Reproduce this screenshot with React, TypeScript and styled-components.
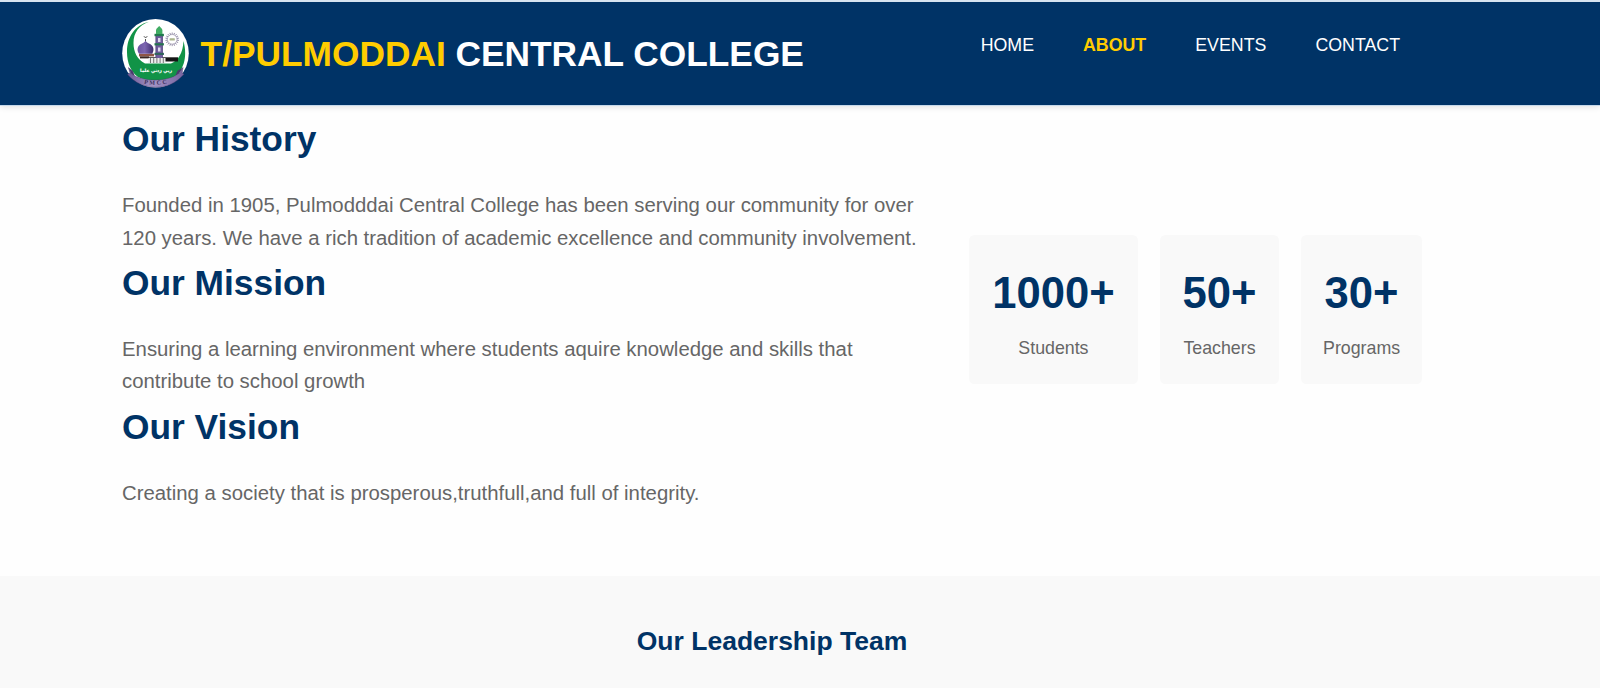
import React from "react";
import styled, { createGlobalStyle } from "styled-components";

const navy = "#003366";
const gold = "#ffcc00";

const GlobalStyle = createGlobalStyle`
  * { box-sizing: border-box; margin: 0; padding: 0; }
  body {
    font-family: Arial, "Liberation Sans", sans-serif;
    line-height: 1.6;
    background: #fefefe;
    color: #666;
    overflow: hidden;
  }
`;

const Page = styled.div`
  height: 688px;
  overflow: hidden;
  display: flex;
  flex-direction: column;
  border-top: 2px solid #d7e4f0;
`;

const Header = styled.header`
  flex: none;
  height: 103px;
  padding: 0 178px 0 122px;
  display: flex;
  justify-content: space-between;
  background: ${navy};
  box-shadow: 0 1px 0 #c5d8ea, 0 2px 6px rgba(0, 0, 0, 0.12);
`;

const Brand = styled.div`
  display: flex;
  align-items: center;
  gap: 11.6px;
`;

const LogoSvg = styled.svg`
  width: 67px;
  height: 69px;
  flex: none;
  overflow: visible;
`;

const SchoolName = styled.h1`
  font-size: 35.3px;
  line-height: 56px;
  color: #fff;
  white-space: nowrap;
`;

const Accent = styled.span`
  color: ${gold};
`;

const Nav = styled.nav`
  display: flex;
  gap: 49px;
  padding: 29px 22px 0 0;
`;

const NavLink = styled.a<{ $active?: boolean }>`
  font-size: 17.8px;
  line-height: 28px;
  color: ${(p) => (p.$active ? gold : "#fff")};
  font-weight: ${(p) => (p.$active ? 700 : 400)};
`;

const About = styled.main`
  flex: none;
  height: 471px;
  padding: 6px 178px 0 122px;
  display: flex;
  justify-content: space-between;
`;

const Story = styled.div`
  width: 803px;
`;

const Heading = styled.h2`
  font-size: 35.35px;
  line-height: 56px;
  margin-bottom: 22px;
  color: ${navy};
`;

const Paragraph = styled.p`
  font-size: 20.35px;
  line-height: 32.6px;
  margin-bottom: 0.7px;
`;

const Stats = styled.div`
  display: flex;
  align-items: flex-start;
  gap: 22.4px;
  padding-top: 124.4px;
`;

const StatCard = styled.div<{ $width: number }>`
  width: ${(p) => p.$width}px;
  height: 149px;
  padding: 22.8px 0 0;
  border-radius: 5.5px;
  background: #f9f9f9;
  text-align: center;
`;

const StatValue = styled.div`
  font-size: 43.6px;
  line-height: 70.4px;
  margin-bottom: 5.4px;
  font-weight: 700;
  color: ${navy};
`;

const StatLabel = styled.div`
  font-size: 17.8px;
  line-height: 28.2px;
`;

const Team = styled.section`
  flex: 1;
  padding: 43.5px 178px 0 122px;
  background: #f9f9f9;
`;

const TeamTitle = styled.h3`
  font-size: 26.5px;
  line-height: 42.2px;
  text-align: center;
  color: ${navy};
`;

const spokes = Array.from({ length: 18 }, (_, i) => i * 20);
const columns = [0, 1, 2, 3, 4];

function Logo() {
  return (
    <LogoSvg viewBox="0 0 67 69" aria-label="School crest">
      <defs>
        <linearGradient id="dome" x1="0" x2="1">
          <stop offset="0" stopColor="#6a54a0" />
          <stop offset="0.45" stopColor="#7d66b0" />
          <stop offset="1" stopColor="#3c2a6b" />
        </linearGradient>
        <linearGradient id="ribbon" x1="0" x2="1">
          <stop offset="0" stopColor="#6c5a96" />
          <stop offset="0.45" stopColor="#a495c6" />
          <stop offset="1" stopColor="#75639f" />
        </linearGradient>
      </defs>
      <ellipse cx="33.500" cy="34.300" rx="33.300" ry="34.300" fill="#fff" />
      <path
        d="M27 2.800C13 6 5 18 5 33c0 11 4 20 11 25 10 5.500 26 5.500 36 0C61 52 66 39 61.500 22 61 34 56 42 49 44.500H23C15 40 11.500 33 11.500 24 11.500 14 17 6 27 2.800Z"
        fill="#119347"
      />
      <rect x="17" y="34.800" width="15" height="2.600" fill="#8f5546" />
      <rect x="18" y="37.400" width="9" height="2" fill="#3b2622" />
      <rect x="27" y="38.300" width="29" height="4.200" fill="#151515" />
      <path d="M17 34.800c-2.200-3.200-2-7 1.500-9.500C20.500 24 22.800 23.500 23.500 21.500c.7 2 3 2.500 5 3.800 3.500 2.500 3.700 6.300 1.700 9.500Z" fill="url(#dome)" />
      <path d="M23.500 22v-2M22 17.300a1.700 1.700 0 0 0 3.200 0" fill="none" stroke="#222" strokeWidth="0.800" />
      <rect x="33.700" y="17" width="7" height="22" fill="#6f5b9d" />
      <path d="M33.900 17v22M40.500 17v22" stroke="#4b3e70" strokeWidth="0.600" />
      <rect x="36" y="19" width="2.500" height="4" fill="#dcd8ec" />
      <rect x="36" y="28.500" width="2.500" height="4" fill="#dcd8ec" />
      <rect x="32.500" y="14.800" width="9.400" height="2.400" fill="#22794e" />
      <rect x="32.500" y="24.200" width="9.400" height="2.200" fill="#267350" />
      <rect x="32.500" y="33.800" width="9.400" height="2.200" fill="#31645d" />
      <path d="M34 15v-4c.5-1.800 1.800-2.400 3.200-4 1.400 1.600 2.700 2.200 3.200 4v4Z" fill="#41ad64" />
      <rect x="26.500" y="39" width="17" height="5" fill="#ededed" />
      {columns.map((n) => (
        <path key={n} d={`M${28.5 + n * 3.2} 39v5`} stroke="#444" strokeWidth="0.700" />
      ))}
      <circle cx="50.200" cy="20.300" r="4.800" fill="none" stroke="#a39eb3" strokeWidth="0.700" />
      {spokes.map((a) => (
        <path key={a} d="M50.200 13.500v2" stroke="#8e87a4" strokeWidth="0.900" transform={`rotate(${a} 50.200 20.300)`} />
      ))}
      <rect x="47.600" y="19.300" width="5.200" height="2.200" rx="0.500" fill="#a9b48c" />
      <path
        d="M6.500 48.500l3 6.800c13 7.600 34 7.900 47-.3l4.500-6.500-.8 5.500 1.800 1.200C54 64 45 68.300 34 68.300S13 64 5.500 55.500l2.500-1.500Z"
        fill="url(#ribbon)"
        stroke="#413264"
        strokeWidth="0.400"
      />
      <path d="M6.500 48.500l3 6.800 3.400 1.700-2.200-5ZM61 48.500l-4.500 6.500-3.200 1.700 2.200-5Z" fill="#493a6c" />
      <text x="34" y="53" textAnchor="middle" fontSize="4.400" fontWeight="700" fill="#fff" stroke="#fff" strokeWidth="0.150" fontFamily="DejaVu Sans, sans-serif">
        ربي زدني علما
      </text>
      <path id="motto" d="M22 64.500Q34.500 67.500 50 63.500" fill="none" />
      <text fontSize="6" fontWeight="700" fontFamily="Liberation Serif, serif" fill="#3a2e5a" letterSpacing="1.800">
        <textPath href="#motto">PMCC</textPath>
      </text>
    </LogoSvg>
  );
}

const links = ["HOME", "ABOUT", "EVENTS", "CONTACT"];

const sections = [
  {
    title: "Our History",
    text: "Founded in 1905, Pulmodddai Central College has been serving our community for over 120 years. We have a rich tradition of academic excellence and community involvement.",
  },
  {
    title: "Our Mission",
    text: "Ensuring a learning environment where students aquire knowledge and skills that contribute to school growth",
  },
  {
    title: "Our Vision",
    text: "Creating a society that is prosperous,truthfull,and full of integrity.",
  },
];

const stats = [
  { value: "1000+", label: "Students", width: 168.8 },
  { value: "50+", label: "Teachers", width: 118.5 },
  { value: "30+", label: "Programs", width: 120.9 },
];

export default function App() {
  return (
    <>
      <GlobalStyle />
      <Page>
        <Header>
          <Brand>
            <Logo />
            <SchoolName>
              <Accent>T/PULMODDAI</Accent> CENTRAL COLLEGE
            </SchoolName>
          </Brand>
          <Nav>
            {links.map((label) => (
              <NavLink key={label} $active={label === "ABOUT"}>
                {label}
              </NavLink>
            ))}
          </Nav>
        </Header>
        <About>
          <Story>
            {sections.map((s) => (
              <React.Fragment key={s.title}>
                <Heading>{s.title}</Heading>
                <Paragraph>{s.text}</Paragraph>
              </React.Fragment>
            ))}
          </Story>
          <Stats>
            {stats.map((s) => (
              <StatCard key={s.label} $width={s.width}>
                <StatValue>{s.value}</StatValue>
                <StatLabel>{s.label}</StatLabel>
              </StatCard>
            ))}
          </Stats>
        </About>
        <Team>
          <TeamTitle>Our Leadership Team</TeamTitle>
        </Team>
      </Page>
    </>
  );
}
